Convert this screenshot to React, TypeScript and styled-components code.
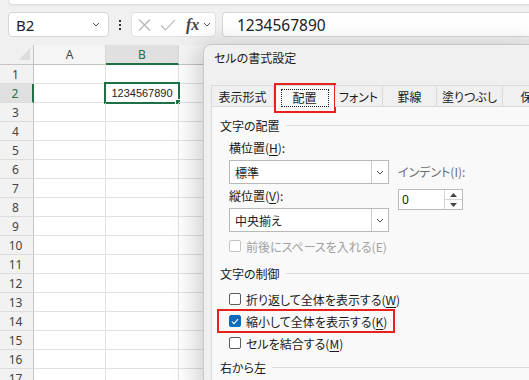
import React from "react";
import styled, { createGlobalStyle } from "styled-components";

const GlobalStyle = createGlobalStyle`
  html, body {
    margin: 0;
    padding: 0;
    background: #f0f0f0;
  }
  * {
    box-sizing: border-box;
  }
`;

const UI_FONT = `"Noto Sans CJK JP", "Noto Sans", sans-serif`;
const LATIN_FONT = `"Noto Sans", "Noto Sans CJK JP", sans-serif`;
const GREEN = "#1e7145";

const COLUMNS = ["A", "B", ""];
const ROWS = Array.from({ length: 17 }, (_, i) => i + 1);

const TABS = [
  { label: "表示形式", width: 63 },
  { label: "配置", width: 61, active: true },
  { label: "フォント", width: 48 },
  { label: "罫線", width: 54 },
  { label: "塗りつぶし", width: 66 },
  { label: "保護", width: 60 },
];

export default function App() {
  return (
    <>
      <GlobalStyle />
      <Screen>
        <RibbonEdge />
        <FormulaBar>
          <NameBox>
            <span>B2</span>
            <Chevron size={6} />
          </NameBox>
          <Dots>
            <i />
            <i />
            <i />
          </Dots>
          <FxBox>
            <svg width="13" height="12" viewBox="0 0 13 12">
              <path d="M1 0.5 L12 11.5 M12 0.5 L1 11.5" stroke="#b4b4b4" strokeWidth="1.1" fill="none" />
            </svg>
            <svg width="16" height="12" viewBox="0 0 16 12">
              <path d="M1 6.5 L5.5 11 L15 0.8" stroke="#b4b4b4" strokeWidth="1.1" fill="none" />
            </svg>
            <FxLabel>fx</FxLabel>
            <Chevron size={6} />
          </FxBox>
          <FormulaInput>1234567890</FormulaInput>
        </FormulaBar>

        <Sheet>
          <Corner>
            <svg width="11" height="12" viewBox="0 0 11 12">
              <path d="M11 0 L11 12 L0 12 Z" fill="#dcdcdc" />
            </svg>
          </Corner>
          {COLUMNS.map((c) => (
            <ColHeader key={c || "c"} selected={c === "B"}>
              {c}
            </ColHeader>
          ))}
          {ROWS.map((r) => (
            <React.Fragment key={r}>
              <RowHeader selected={r === 2}>{r}</RowHeader>
              {COLUMNS.map((c) => (
                <Cell key={c || "c"}>
                  {r === 2 && c === "B" && (
                    <>
                      <CellText>1234567890</CellText>
                      <Selection>
                        <FillHandle />
                      </Selection>
                    </>
                  )}
                </Cell>
              ))}
            </React.Fragment>
          ))}
        </Sheet>

        <Dialog>
          <TitleBar>セルの書式設定</TitleBar>
          <TabStrip>
            {TABS.map((t) => (
              <Tab key={t.label} width={t.width} active={t.active}>
                {t.active ? <FocusRect>{t.label}</FocusRect> : t.label}
                {t.active && <Highlight />}
              </Tab>
            ))}
          </TabStrip>
          <Panel>
            <GroupHeader>文字の配置</GroupHeader>
            <AlignRow>
              <FieldColumn>
                <FieldLabel>
                  横位置(<u>H</u>):
                </FieldLabel>
                <Select>
                  <span>標準</span>
                  <DropButton>
                    <Chevron size={6} />
                  </DropButton>
                </Select>
                <FieldLabel style={{ marginTop: 4 }}>
                  縦位置(<u>V</u>):
                </FieldLabel>
                <Select>
                  <span>中央揃え</span>
                  <DropButton>
                    <Chevron size={6} />
                  </DropButton>
                </Select>
              </FieldColumn>
              <IndentColumn>
                <FieldLabel disabled>インデント(I):</FieldLabel>
                <SpinBox>
                  <span>0</span>
                  <SpinButtons>
                    <SpinHalf>
                      <svg width="7" height="4" viewBox="0 0 7 4">
                        <path d="M0 4 L3.5 0 L7 4 Z" fill="#444" />
                      </svg>
                    </SpinHalf>
                    <SpinHalf>
                      <svg width="7" height="4" viewBox="0 0 7 4">
                        <path d="M0 0 L3.5 4 L7 0 Z" fill="#444" />
                      </svg>
                    </SpinHalf>
                  </SpinButtons>
                </SpinBox>
              </IndentColumn>
            </AlignRow>
            <CheckRow disabled style={{ marginTop: 6 }}>
              <CheckBox disabled />
              <span>前後にスペースを入れる(E)</span>
            </CheckRow>

            <GroupHeader style={{ marginTop: 11 }}>文字の制御</GroupHeader>
            <CheckRow style={{ marginTop: 10 }}>
              <CheckBox />
              <span>
                折り返して全体を表示する(<u>W</u>)
              </span>
            </CheckRow>
            <CheckRow style={{ marginTop: 6 }}>
              <CheckBox checked>
                <svg width="8" height="7" viewBox="0 0 8 7">
                  <path d="M1 3.6 L3 5.6 L7 1.2" stroke="#fff" strokeWidth="1.1" fill="none" />
                </svg>
              </CheckBox>
              <span>
                縮小して全体を表示する(<u>K</u>)
              </span>
              <RowHighlight />
            </CheckRow>
            <CheckRow style={{ marginTop: 6 }}>
              <CheckBox />
              <span>
                セルを結合する(<u>M</u>)
              </span>
            </CheckRow>
            <GroupHeader style={{ marginTop: 8 }}>右から左</GroupHeader>
          </Panel>
        </Dialog>
      </Screen>
    </>
  );
}

function Chevron({ size }: { size: number }) {
  return (
    <svg width={size + 2} height={size / 2 + 2} viewBox={`0 0 ${size + 2} ${size / 2 + 2}`}>
      <path
        d={`M1 1 L${size / 2 + 1} ${size / 2 + 1} L${size + 1} 1`}
        stroke="#555"
        strokeWidth="1"
        fill="none"
      />
    </svg>
  );
}

const Screen = styled.div`
  position: relative;
  width: 529px;
  height: 380px;
  overflow: hidden;
  background: #f0f0f0;
  font-family: ${UI_FONT};
  font-feature-settings: "palt";
  color: #1b1b1b;
`;

const RibbonEdge = styled.div`
  margin-left: 8px;
  height: 5px;
  background: #fff;
  border-left: 1px solid #dedede;
  border-bottom: 1px solid #dedede;
  border-bottom-left-radius: 7px;
  box-shadow: 0 1px 2px rgba(0, 0, 0, 0.05);
`;

const FormulaBar = styled.div`
  display: flex;
  align-items: stretch;
  height: 25px;
  margin-top: 7px;
  padding-left: 8px;
`;

const NameBox = styled.div`
  width: 101px;
  display: flex;
  align-items: center;
  justify-content: space-between;
  padding: 0 8px 0 7px;
  background: #fff;
  border: 1px solid #d6d6d6;
  border-radius: 4px;
  font-family: ${LATIN_FONT};
  font-size: 15px;
  color: #222;
`;

const Dots = styled.div`
  width: 22px;
  display: flex;
  flex-direction: column;
  align-items: center;
  justify-content: center;
  gap: 2px;

  i {
    width: 2px;
    height: 2px;
    background: #333;
  }
`;

const FxBox = styled.div`
  width: 85px;
  display: flex;
  align-items: center;
  gap: 9px;
  padding-left: 6px;
  background: #fff;
  border: 1px solid #e0e0e0;
  border-radius: 4px;

  svg:last-child {
    margin-left: -5px;
  }
`;

const FxLabel = styled.span`
  font-family: "Liberation Serif", serif;
  font-style: italic;
  font-weight: bold;
  font-size: 16px;
  color: #444;
  margin-left: 1px;
`;

const FormulaInput = styled.div`
  flex: 1;
  margin-left: 6px;
  display: flex;
  align-items: center;
  padding-left: 14px;
  background: #fff;
  border: 1px solid #d6d6d6;
  border-right: none;
  border-radius: 4px 0 0 4px;
  font-family: ${LATIN_FONT};
  font-size: 15.5px;
  color: #222;
`;

const Sheet = styled.div`
  display: grid;
  grid-template-columns: 34px 72px 73px 1fr;
  grid-template-rows: 20px;
  grid-auto-rows: 19px;
  margin-top: 8px;
  background: #fff;
  font-family: ${LATIN_FONT};
  font-size: 12px;
`;

const Corner = styled.div`
  display: flex;
  align-items: flex-end;
  justify-content: flex-end;
  padding: 0 3px 4px 0;
  background: #f0f0f0;
  border-right: 1px solid #c4c4c4;
  border-bottom: 1px solid #c4c4c4;
`;

const ColHeader = styled.div<{ selected?: boolean }>`
  display: flex;
  align-items: center;
  justify-content: center;
  background: ${(p) => (p.selected ? "#e0e0e0" : "#f5f5f5")};
  color: ${(p) => (p.selected ? GREEN : "#444")};
  border-right: 1px solid #d8d8d8;
  border-bottom: ${(p) => (p.selected ? `2px solid ${GREEN}` : "1px solid #c4c4c4")};
`;

const RowHeader = styled.div<{ selected?: boolean }>`
  display: flex;
  align-items: center;
  justify-content: center;
  padding-right: 2px;
  background: ${(p) => (p.selected ? "#e0e0e0" : "#f2f2f2")};
  color: ${(p) => (p.selected ? GREEN : "#444")};
  border-right: ${(p) => (p.selected ? `2px solid ${GREEN}` : "1px solid #c4c4c4")};
  border-bottom: 1px solid #dcdcdc;
`;

const Cell = styled.div`
  position: relative;
  display: flex;
  align-items: center;
  justify-content: center;
  border-right: 1px solid #e1e1e1;
  border-bottom: 1px solid #e1e1e1;
`;

const CellText = styled.span`
  font-family: "Liberation Sans", sans-serif;
  font-size: 11px;
  color: #222;
`;

const Selection = styled.div`
  position: absolute;
  left: -2px;
  top: -2px;
  width: 76px;
  height: 22px;
  border: 2px solid ${GREEN};
`;

const FillHandle = styled.div`
  position: absolute;
  right: -3px;
  bottom: -3px;
  width: 6px;
  height: 6px;
  background: ${GREEN};
  border: 1px solid #fff;
`;

const Dialog = styled.div`
  position: absolute;
  left: 203px;
  top: 44px;
  width: 340px;
  height: 350px;
  background: #f0f0f0;
  border: 1px solid #c8c8c8;
  border-top-left-radius: 8px;
  box-shadow: -6px 2px 26px rgba(0, 0, 0, 0.2);
  font-size: 12px;
  overflow: hidden;
`;

const TitleBar = styled.div`
  height: 40px;
  padding: 5px 0 0 10px;
  line-height: 16px;
  color: #1a1a1a;
`;

const TabStrip = styled.div`
  display: flex;
  padding-left: 7px;
  height: 22px;
  position: relative;
  z-index: 1;
`;

const Tab = styled.div<{ width: number; active?: boolean }>`
  position: relative;
  flex-shrink: 0;
  width: ${(p) => p.width}px;
  display: flex;
  align-items: center;
  justify-content: center;
  white-space: nowrap;
  background: ${(p) => (p.active ? "#f9f9f9" : "#f0f0f0")};
  border: 1px solid #dadada;
  border-left: ${(p) => (p.active ? "1px solid #dadada" : "none")};
  border-bottom: ${(p) => (p.active ? "none" : "1px solid #dadada")};
  height: ${(p) => (p.active ? "23px" : "22px")};
  color: #1a1a1a;

  &:first-child {
    border-left: 1px solid #dadada;
  }
`;

const FocusRect = styled.span`
  display: flex;
  align-items: center;
  justify-content: center;
  width: 48px;
  height: 18px;
  margin-top: 1px;
  border: 1px dotted #222;
`;

const Highlight = styled.div`
  position: absolute;
  left: -1px;
  top: -3px;
  width: 62px;
  height: 30px;
  border: 2px solid #e8211d;
`;

const Panel = styled.div`
  margin-left: 7px;
  margin-top: -1px;
  height: 300px;
  padding: 10px 0 0 8px;
  background: #f9f9f9;
  border-top: 1px solid #dadada;
  border-left: 1px solid #dadada;
`;

const GroupHeader = styled.div`
  display: flex;
  align-items: center;
  gap: 6px;
  height: 16px;
  color: #1a1a1a;

  &::after {
    content: "";
    flex: 1;
    height: 1px;
    background: #dcdcdc;
  }
`;

const AlignRow = styled.div`
  display: flex;
  gap: 9px;
  margin-top: 7px;
  padding-left: 9px;
`;

const FieldColumn = styled.div`
  width: 160px;
  display: flex;
  flex-direction: column;
`;

const IndentColumn = styled.div`
  width: 65px;
  display: flex;
  flex-direction: column;
  padding-top: 24px;
  gap: 5px;
`;

const FieldLabel = styled.div<{ disabled?: boolean }>`
  height: 16px;
  line-height: 16px;
  margin-bottom: 4px;
  color: ${(p) => (p.disabled ? "#6e6e6e" : "#1a1a1a")};
  white-space: nowrap;

  u {
    text-underline-offset: 2px;
  }
`;

const Select = styled.div`
  height: 24px;
  display: flex;
  align-items: center;
  justify-content: space-between;
  padding-left: 5px;
  background: #fff;
  border: 1px solid #b9b9b9;
  color: #1a1a1a;
`;

const DropButton = styled.div`
  width: 17px;
  height: 100%;
  display: flex;
  align-items: center;
  justify-content: center;
  border-left: 1px solid #cfcfcf;
`;

const SpinBox = styled.div`
  height: 21px;
  display: flex;
  align-items: center;
  justify-content: space-between;
  padding-left: 3px;
  background: #fff;
  border: 1px solid #b9b9b9;
  font-family: ${LATIN_FONT};
`;

const SpinButtons = styled.div`
  width: 18px;
  height: 100%;
  display: flex;
  flex-direction: column;
  border-left: 1px solid #d4d4d4;
`;

const SpinHalf = styled.div`
  flex: 1;
  display: flex;
  align-items: center;
  justify-content: center;

  & + & {
    border-top: 1px solid #d4d4d4;
  }
`;

const CheckRow = styled.div<{ disabled?: boolean }>`
  position: relative;
  display: flex;
  align-items: center;
  gap: 5px;
  height: 16px;
  padding-left: 9px;
  color: ${(p) => (p.disabled ? "#a0a0a0" : "#1a1a1a")};
  white-space: nowrap;

  u {
    text-underline-offset: 2px;
  }
`;

const CheckBox = styled.span<{ checked?: boolean; disabled?: boolean }>`
  width: 12px;
  height: 12px;
  display: inline-flex;
  align-items: center;
  justify-content: center;
  border-radius: 2px;
  background: ${(p) => (p.checked ? "#0f6cbd" : "#fff")};
  border: 1px solid ${(p) => (p.checked ? "#0f6cbd" : p.disabled ? "#c4c4c4" : "#5c5c5c")};
`;

const RowHighlight = styled.div`
  position: absolute;
  left: -3px;
  top: -4px;
  width: 178px;
  height: 24px;
  border: 2px solid #e8211d;
`;
